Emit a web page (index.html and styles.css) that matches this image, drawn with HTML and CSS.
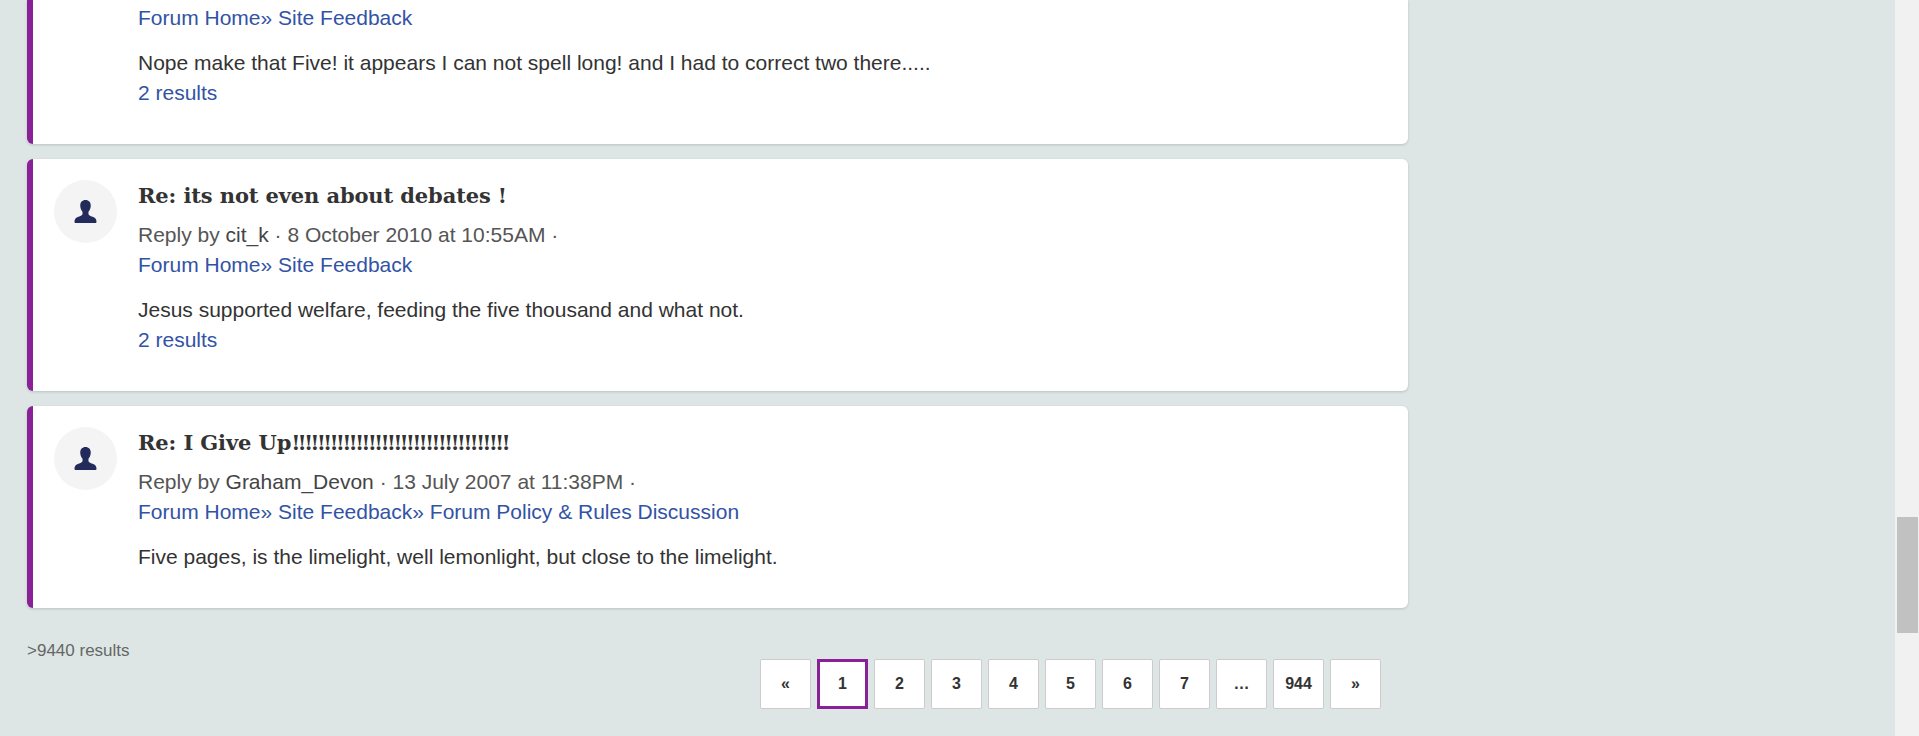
FILE: index.html
```html
<!DOCTYPE html>
<html lang="en">
<head>
<meta charset="utf-8">
<title>Search results</title>
<link rel="stylesheet" href="styles.css">
</head>
<body>
<div class="window">
  <main class="page">
    <section class="results">
      <article class="card card-cut">
        <div class="avatar-slot"></div>
        <div class="body">
          <div class="line"><a href="#">Forum Home</a><a href="#">» Site Feedback</a></div>
          <p class="excerpt">Nope make that Five! it appears I can not spell long! and I had to correct two there.....</p>
          <div class="line"><a href="#">2 results</a></div>
        </div>
      </article>
      <article class="card">
        <div class="avatar">
          <svg class="person" viewBox="0 0 24 24"><path d="M12 0C8.600 0 6.500 2.400 6.500 5.800C6.500 8.400 7.500 10.800 8.900 12.200V14.500C8.900 15.800 7 16.500 4.600 17.400C2 18.400 .5 19.800 .5 22.600C.5 23.500 1 24 1.800 24H22.200C23 24 23.500 23.500 23.500 22.600C23.500 19.800 22 18.400 19.400 17.400C17 16.500 15.100 15.800 15.100 14.500V12.200C16.500 10.800 17.500 8.400 17.500 5.800C17.500 2.400 15.400 0 12 0Z"/></svg>
        </div>
        <div class="body">
          <h3 class="title">Re: its not even about debates !</h3>
          <div class="line meta">Reply by <span class="author">cit_k</span> · 8 October 2010 at 10:55AM ·</div>
          <div class="line"><a href="#">Forum Home</a><a href="#">» Site Feedback</a></div>
          <p class="excerpt">Jesus supported welfare, feeding the five thousand and what not.</p>
          <div class="line"><a href="#">2 results</a></div>
        </div>
      </article>
      <article class="card">
        <div class="avatar">
          <svg class="person" viewBox="0 0 24 24"><path d="M12 0C8.600 0 6.500 2.400 6.500 5.800C6.500 8.400 7.500 10.800 8.900 12.200V14.500C8.900 15.800 7 16.500 4.600 17.400C2 18.400 .5 19.800 .5 22.600C.5 23.500 1 24 1.800 24H22.200C23 24 23.500 23.500 23.500 22.600C23.500 19.800 22 18.400 19.400 17.400C17 16.500 15.100 15.800 15.100 14.500V12.200C16.500 10.800 17.500 8.400 17.500 5.800C17.500 2.400 15.400 0 12 0Z"/></svg>
        </div>
        <div class="body">
          <h3 class="title">Re: I Give Up<span class="bangs">!!!!!!!!!!!!!!!!!!!!!!!!!!!!!!!!!!</span></h3>
          <div class="line meta">Reply by <span class="author">Graham_Devon</span> · 13 July 2007 at 11:38PM ·</div>
          <div class="line"><a href="#">Forum Home</a><a href="#">» Site Feedback</a><a href="#">» Forum Policy &amp; Rules Discussion</a></div>
          <p class="excerpt">Five pages, is the limelight, well lemonlight, but close to the limelight.</p>
        </div>
      </article>
    </section>
    <footer class="foot">
      <div class="count">&gt;9440 results</div>
      <nav class="pager">
        <a class="pg" href="#">«</a>
        <a class="pg pg-on" href="#">1</a>
        <a class="pg" href="#">2</a>
        <a class="pg" href="#">3</a>
        <a class="pg" href="#">4</a>
        <a class="pg" href="#">5</a>
        <a class="pg" href="#">6</a>
        <a class="pg" href="#">7</a>
        <a class="pg" href="#">…</a>
        <a class="pg" href="#">944</a>
        <a class="pg" href="#">»</a>
      </nav>
    </footer>
  </main>
  <aside class="sidebar"></aside>
  <div class="scrollbar"><div class="thumb"></div></div>
</div>
</body>
</html>
```
FILE: styles.css
```css
* { box-sizing: border-box; }
html, body { margin: 0; height: 100%; overflow: hidden; }
body {
  background: #dde6e4;
  color: #333;
  font-family: "Liberation Sans", Arial, sans-serif;
  font-size: 21px;
  line-height: 30px;
}
.window { display: flex; height: 736px; }
.page { width: 1381px; margin-left: 27px; flex: none; }
.sidebar { flex: 1; }
.results { display: flex; flex-direction: column; gap: 15px; }
.card {
  display: grid;
  grid-template-columns: 63px 1fr;
  column-gap: 21px;
  padding: 21px 21px 36px;
  background: #fff;
  border-left: 6px solid #8a2097;
  border-radius: 6px;
  box-shadow: 0 1px 3px rgba(0, 0, 0, .16);
}
.card-cut { padding-top: 3px; border-top-left-radius: 0; border-top-right-radius: 0; }
.avatar {
  display: flex;
  align-items: center;
  justify-content: center;
  width: 63px;
  height: 63px;
  border-radius: 50%;
  background: #f4f4f4;
}
.person { display: block; width: 23px; height: 23px; fill: #232b5a; }
.title {
  margin: 0 0 8px;
  font-family: "DejaVu Serif", serif;
  font-size: 21px;
  line-height: 32px;
  font-weight: 700;
  letter-spacing: -.12px;
  color: #333;
}
.bangs { letter-spacing: -2.85px; }
a { color: #3253a5; text-decoration: none; }
.meta { color: #555; }
.author { color: #444; }
.excerpt { margin: 15px 0 0; }
.foot { display: flex; justify-content: space-between; align-items: flex-start; padding: 0 27px 0 0; }
.count { margin-top: 31px; font-size: 17px; line-height: 24px; color: #666; }
.pager { display: flex; gap: 6px; margin-top: 51px; }
.pg {
  display: flex;
  align-items: center;
  justify-content: center;
  width: 51px;
  height: 50px;
  background: #fff;
  border: 1px solid #ccc;
  border-radius: 2px;
  color: #333;
  font-size: 16px;
  font-weight: 700;
}
.pg-on { border: 3px solid #8a2097; border-radius: 0; }
.scrollbar { flex: none; width: 24px; height: 736px; padding: 517px 1px 0 2px; background: #f1f1f1; }
.thumb { height: 116px; background: #c1c1c1; }
```
